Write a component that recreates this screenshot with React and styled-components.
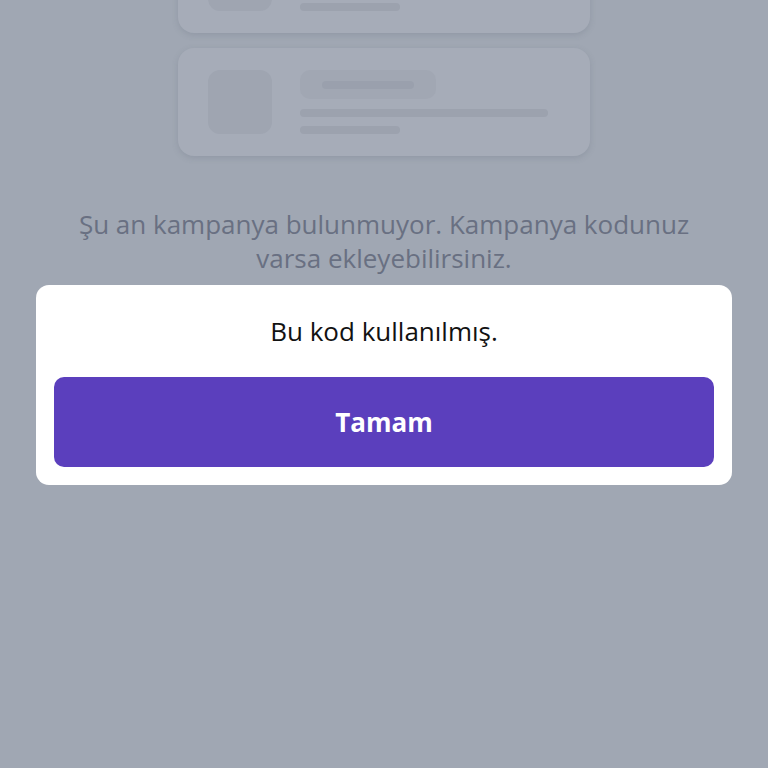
import React from "react";
import styled, { createGlobalStyle } from "styled-components";

const Global = createGlobalStyle`
  html, body { margin: 0; padding: 0; background: #a0a7b3; }
  body { font-family: "Open Sans", "Noto Sans", sans-serif; }
  * { box-sizing: border-box; }
`;

const Screen = styled.div`
  position: relative;
  width: 768px;
  height: 768px;
  overflow: hidden;
  background: #a0a7b3;
`;

const Page = styled.div`
  display: flex;
  flex-direction: column;
  align-items: center;
`;

const CardList = styled.div`
  display: flex;
  flex-direction: column;
  gap: 15px;
  margin-top: -75px;
`;

const Card = styled.div`
  width: 412px;
  height: 108px;
  border-radius: 16px;
  background: #a6acb8;
  box-shadow: 0 2px 6px rgba(80, 88, 104, 0.18);
  display: flex;
  align-items: center;
  padding: 0 30px;
  gap: 28px;
`;

const Thumb = styled.div`
  width: 64px;
  height: 64px;
  border-radius: 12px;
  background: #9fa5b1;
`;

const Lines = styled.div`
  display: flex;
  flex-direction: column;
  height: 64px;
`;

const Pill = styled.div`
  width: 136px;
  height: 30px;
  border-radius: 10px;
  background: #a1a7b3;
  display: flex;
  align-items: center;
  padding-left: 22px;
`;

const PillBar = styled.div`
  width: 92px;
  height: 8px;
  border-radius: 4px;
  background: #9aa0ad;
`;

const Bar = styled.div`
  width: ${(p) => p.w}px;
  height: 8px;
  border-radius: 4px;
  background: #9ca2ae;
  margin-top: ${(p) => p.mt}px;
`;

const Message = styled.p`
  margin: 51px 0 0;
  width: 640px;
  text-align: center;
  font-size: 26px;
  font-weight: 500;
  line-height: 34px;
  color: #697082;
`;

const Dialog = styled.div`
  position: absolute;
  left: 36px;
  top: 285px;
  width: 696px;
  height: 200px;
  background: #ffffff;
  border-radius: 13px;
  padding: 18px;
  display: flex;
  flex-direction: column;
  align-items: center;
`;

const DialogText = styled.div`
  font-size: 26px;
  font-weight: 500;
  height: 56px;
  margin-bottom: 18px;
  color: #121212;
  display: flex;
  align-items: center;
`;

const Button = styled.button`
  width: 660px;
  height: 90px;
  border: none;
  border-radius: 10px;
  background: #5b3fbd;
  color: #ffffff;
  font-family: "Open Sans", "Noto Sans", sans-serif;
  font-weight: 700;
  font-size: 26px;
  cursor: pointer;
`;

function SkeletonCard() {
  return (
    <Card>
      <Thumb />
      <Lines>
        <Pill>
          <PillBar />
        </Pill>
        <Bar w={248} mt={10} />
        <Bar w={100} mt={9} />
      </Lines>
    </Card>
  );
}

export default function App() {
  return (
    <Screen>
      <Global />
      <Page>
        <CardList>
          <SkeletonCard />
          <SkeletonCard />
        </CardList>
        <Message>
          Şu an kampanya bulunmuyor. Kampanya kodunuz varsa ekleyebilirsiniz.
        </Message>
      </Page>
      <Dialog>
        <DialogText>Bu kod kullanılmış.</DialogText>
        <Button>Tamam</Button>
      </Dialog>
    </Screen>
  );
}
